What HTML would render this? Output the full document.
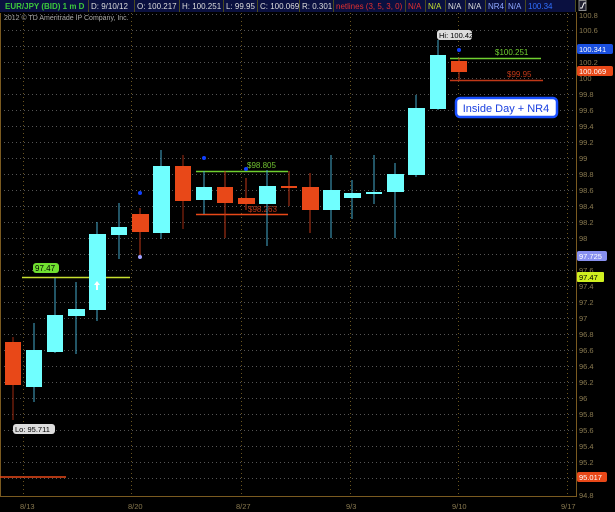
<!DOCTYPE html>
<html><head><meta charset="utf-8"><style>
html,body{margin:0;padding:0;background:#000;width:615px;height:512px;overflow:hidden;font-family:"Liberation Sans",sans-serif}
</style></head><body>
<svg width="615" height="512" xmlns="http://www.w3.org/2000/svg" font-family="Liberation Sans, sans-serif">
<rect width="615" height="512" fill="#000"/>
<!-- header -->
<rect x="0" y="0" width="576" height="12" fill="#0a1040"/>
<g stroke="#4a4a20" stroke-width="1">
<line x1="88.5" y1="0" x2="88.5" y2="12"/><line x1="134.5" y1="0" x2="134.5" y2="12"/><line x1="179.5" y1="0" x2="179.5" y2="12"/><line x1="223.5" y1="0" x2="223.5" y2="12"/><line x1="257.5" y1="0" x2="257.5" y2="12"/><line x1="299.5" y1="0" x2="299.5" y2="12"/><line x1="333.5" y1="0" x2="333.5" y2="12"/><line x1="405.5" y1="0" x2="405.5" y2="12"/><line x1="425.5" y1="0" x2="425.5" y2="12"/><line x1="445.5" y1="0" x2="445.5" y2="12"/><line x1="465.5" y1="0" x2="465.5" y2="12"/><line x1="485.5" y1="0" x2="485.5" y2="12"/><line x1="505.5" y1="0" x2="505.5" y2="12"/><line x1="525.5" y1="0" x2="525.5" y2="12"/><line x1="575.5" y1="0" x2="575.5" y2="12"/>
</g>
<g font-size="8" y="9">
<text x="5" y="9" fill="#3cc83c" font-weight="bold">EUR/JPY (BID) 1 m D</text>
<text x="91" y="9" fill="#ddd">D: 9/10/12</text>
<text x="137" y="9" fill="#ddd">O: 100.217</text>
<text x="182" y="9" fill="#ddd">H: 100.251</text>
<text x="226" y="9" fill="#ddd">L: 99.95</text>
<text x="260" y="9" fill="#ddd">C: 100.069</text>
<text x="302" y="9" fill="#ddd">R: 0.301</text>
<text x="336" y="9" fill="#e03030">netlines (3, 5, 3, 0)</text>
<text x="408" y="9" fill="#e03030">N/A</text>
<text x="428" y="9" fill="#c8e030">N/A</text>
<text x="448" y="9" fill="#ddd">N/A</text>
<text x="468" y="9" fill="#ddd">N/A</text>
<text x="488" y="9" fill="#8fa8ff">NR4</text>
<text x="508" y="9" fill="#8fa8ff">N/A</text>
<text x="528" y="9" fill="#3070ff">100.34</text>
</g>
<rect x="579" y="0.5" width="7" height="10" fill="#223" stroke="#888"/>
<path d="M580 8 L582 8 L584 3 L586 3" stroke="#fff" fill="none"/>
<text x="4" y="20" font-size="7" fill="#aaa">2012 © TD Ameritrade IP Company, Inc.</text>
<!-- grid -->
<g stroke="#555" stroke-width="1" stroke-dasharray="1,3">
<line x1="0" y1="14.5" x2="576" y2="14.5"/><line x1="0" y1="30.5" x2="576" y2="30.5"/><line x1="0" y1="46.5" x2="576" y2="46.5"/><line x1="0" y1="62.5" x2="576" y2="62.5"/><line x1="0" y1="78.5" x2="576" y2="78.5"/><line x1="0" y1="94.5" x2="576" y2="94.5"/><line x1="0" y1="110.5" x2="576" y2="110.5"/><line x1="0" y1="126.5" x2="576" y2="126.5"/><line x1="0" y1="142.5" x2="576" y2="142.5"/><line x1="0" y1="158.5" x2="576" y2="158.5"/><line x1="0" y1="174.5" x2="576" y2="174.5"/><line x1="0" y1="190.5" x2="576" y2="190.5"/><line x1="0" y1="206.5" x2="576" y2="206.5"/><line x1="0" y1="222.5" x2="576" y2="222.5"/><line x1="0" y1="238.5" x2="576" y2="238.5"/><line x1="0" y1="254.5" x2="576" y2="254.5"/><line x1="0" y1="270.5" x2="576" y2="270.5"/><line x1="0" y1="286.5" x2="576" y2="286.5"/><line x1="0" y1="302.5" x2="576" y2="302.5"/><line x1="0" y1="318.5" x2="576" y2="318.5"/><line x1="0" y1="334.5" x2="576" y2="334.5"/><line x1="0" y1="350.5" x2="576" y2="350.5"/><line x1="0" y1="366.5" x2="576" y2="366.5"/><line x1="0" y1="382.5" x2="576" y2="382.5"/><line x1="0" y1="398.5" x2="576" y2="398.5"/><line x1="0" y1="414.5" x2="576" y2="414.5"/><line x1="0" y1="430.5" x2="576" y2="430.5"/><line x1="0" y1="446.5" x2="576" y2="446.5"/><line x1="0" y1="462.5" x2="576" y2="462.5"/><line x1="0" y1="478.5" x2="576" y2="478.5"/>
</g>
<g stroke="#6a5520" stroke-width="1" stroke-dasharray="1,3">
<line x1="23.5" y1="13" x2="23.5" y2="496"/><line x1="131.5" y1="13" x2="131.5" y2="496"/><line x1="241.5" y1="13" x2="241.5" y2="496"/><line x1="350.5" y1="13" x2="350.5" y2="496"/><line x1="458.5" y1="13" x2="458.5" y2="496"/><line x1="567.5" y1="13" x2="567.5" y2="496"/>
</g>
<!-- axes -->
<line x1="576.5" y1="12" x2="576.5" y2="497" stroke="#7a5a20"/>
<line x1="0" y1="496.5" x2="577" y2="496.5" stroke="#7a5a20"/>
<line x1="0.5" y1="13" x2="0.5" y2="497" stroke="#7a5a20"/>
<g font-size="7.5" fill="#8a7a50">
<text x="579" y="33">100.6</text><text x="579" y="49">100.4</text><text x="579" y="65">100.2</text><text x="579" y="81">100</text><text x="579" y="97">99.8</text><text x="579" y="113">99.6</text><text x="579" y="129">99.4</text><text x="579" y="145">99.2</text><text x="579" y="161">99</text><text x="579" y="177">98.8</text><text x="579" y="193">98.6</text><text x="579" y="209">98.4</text><text x="579" y="225">98.2</text><text x="579" y="241">98</text><text x="579" y="257">97.8</text><text x="579" y="273">97.6</text><text x="579" y="289">97.4</text><text x="579" y="305">97.2</text><text x="579" y="321">97</text><text x="579" y="337">96.8</text><text x="579" y="353">96.6</text><text x="579" y="369">96.4</text><text x="579" y="385">96.2</text><text x="579" y="401">96</text><text x="579" y="417">95.8</text><text x="579" y="433">95.6</text><text x="579" y="449">95.4</text><text x="579" y="465">95.2</text><text x="579" y="498">94.8</text><text x="579" y="18">100.8</text>
<text x="20" y="509">8/13</text><text x="128" y="509">8/20</text><text x="236" y="509">8/27</text><text x="346" y="509">9/3</text><text x="452" y="509">9/10</text><text x="561" y="509">9/17</text>
</g>
<!-- price tags -->
<rect x="577" y="44" width="36" height="10" rx="2" fill="#1a50e0"/><text x="579" y="52" font-size="7.5" fill="#fff">100.341</text>
<rect x="577" y="66" width="36" height="10" rx="2" fill="#e84818"/><text x="579" y="74" font-size="7.5" fill="#fff">100.069</text>
<rect x="577" y="251" width="30" height="10" rx="2" fill="#8890f0"/><text x="579" y="259" font-size="7.5" fill="#fff">97.725</text>
<rect x="577" y="272" width="27" height="10" rx="1" fill="#d0f020"/><text x="579" y="280" font-size="7.5" fill="#000">97.47</text>
<rect x="577" y="472" width="30" height="10" rx="2" fill="#e84818"/><text x="579" y="480" font-size="7.5" fill="#fff">95.017</text>
<line x1="0" y1="477" x2="66" y2="477" stroke="#e84818" stroke-width="1.5"/>
<!-- lines -->
<line x1="22" y1="277.5" x2="130" y2="277.5" stroke="#c8e030" stroke-width="1.5"/>
<rect x="33" y="263" width="26" height="10" rx="3" fill="#70e030"/><text x="35" y="271" font-size="8" fill="#000">97.47</text>
<line x1="196" y1="171.5" x2="288" y2="171.5" stroke="#70d030" stroke-width="1.5"/>
<text x="247" y="168" font-size="8" fill="#70c030">$98.805</text>
<line x1="196" y1="214.5" x2="288" y2="214.5" stroke="#e84818" stroke-width="1.5"/>
<text x="248" y="212" font-size="8" fill="#c03818">$98.263</text>
<line x1="450" y1="58.5" x2="541" y2="58.5" stroke="#70d030" stroke-width="1.5"/>
<text x="495" y="55" font-size="8" fill="#70d030">$100.251</text>
<line x1="450" y1="80.5" x2="543" y2="80.5" stroke="#c03818" stroke-width="1.5"/>
<text x="507" y="77" font-size="8" fill="#c03818">$99.95</text>
<!-- candles -->
<g stroke-width="1">
<line x1="13" y1="337" x2="13" y2="420" stroke="#a02a10"/><rect x="5" y="342" width="16" height="43" fill="#e84818"/>
<line x1="34" y1="323" x2="34" y2="402" stroke="#4ac"/><rect x="26" y="350" width="16" height="37" fill="#70ffff"/>
<line x1="55" y1="278" x2="55" y2="353" stroke="#4ac"/><rect x="47" y="315" width="16" height="37" fill="#70ffff"/>
<line x1="76" y1="282" x2="76" y2="354" stroke="#4ac"/><rect x="68" y="309" width="17" height="7" fill="#70ffff"/>
<line x1="97" y1="222" x2="97" y2="321" stroke="#4ac"/><rect x="89" y="234" width="17" height="76" fill="#70ffff"/>
<line x1="119" y1="203" x2="119" y2="259" stroke="#4ac"/><rect x="111" y="227" width="16" height="8" fill="#70ffff"/>
<line x1="140" y1="208" x2="140" y2="256" stroke="#c03818"/><rect x="132" y="214" width="17" height="18" fill="#e84818"/>
<line x1="161" y1="150" x2="161" y2="239" stroke="#4ac"/><rect x="153" y="166" width="17" height="67" fill="#70ffff"/>
<line x1="183" y1="155" x2="183" y2="229" stroke="#a02a10"/><rect x="175" y="166" width="16" height="35" fill="#e84818"/>
<line x1="204" y1="171" x2="204" y2="214" stroke="#4ac"/><rect x="196" y="187" width="16" height="13" fill="#70ffff"/>
<line x1="225" y1="171" x2="225" y2="238" stroke="#c03818"/><rect x="217" y="187" width="16" height="16" fill="#e84818"/>
<line x1="246" y1="178" x2="246" y2="210" stroke="#c03818"/><rect x="238" y="198" width="17" height="6" fill="#e84818"/>
<line x1="267" y1="170" x2="267" y2="246" stroke="#4ac"/><rect x="259" y="186" width="17" height="18" fill="#70ffff"/>
<line x1="289" y1="171" x2="289" y2="206" stroke="#c03818"/><rect x="281" y="186" width="16" height="2" fill="#e84818"/>
<line x1="310" y1="173" x2="310" y2="233" stroke="#c03818"/><rect x="302" y="187" width="17" height="23" fill="#e84818"/>
<line x1="331" y1="155" x2="331" y2="238" stroke="#4ac"/><rect x="323" y="190" width="17" height="20" fill="#70ffff"/>
<line x1="352" y1="180" x2="352" y2="219" stroke="#4ac"/><rect x="344" y="193" width="17" height="5" fill="#70ffff"/>
<line x1="374" y1="155" x2="374" y2="204" stroke="#4ac"/><rect x="366" y="192" width="16" height="2" fill="#70ffff"/>
<line x1="395" y1="163" x2="395" y2="238" stroke="#4ac"/><rect x="387" y="174" width="17" height="18" fill="#70ffff"/>
<line x1="416" y1="95" x2="416" y2="177" stroke="#4ac"/><rect x="408" y="108" width="17" height="67" fill="#70ffff"/>
<line x1="438" y1="40" x2="438" y2="110" stroke="#4ac"/><rect x="430" y="55" width="16" height="54" fill="#70ffff"/>
<line x1="459" y1="58" x2="459" y2="81" stroke="#c03818"/><rect x="451" y="61" width="16" height="11" fill="#e84818"/>
</g>
<path d="M97 281 L100 285 L98 285 L98 290 L96 290 L96 285 L94 285 Z" fill="#fff"/>
<circle cx="140" cy="193" r="2" fill="#1040ff"/><circle cx="140" cy="257" r="2" fill="#a0a0ff"/>
<circle cx="204" cy="158" r="2" fill="#1040ff"/><circle cx="246" cy="169" r="2" fill="#1040ff"/><circle cx="459" cy="50" r="2" fill="#1040ff"/>
<!-- callouts -->
<rect x="437" y="30" width="35" height="10" rx="3" fill="#ddd"/><text x="439" y="38" font-size="7.5" fill="#000">Hi: 100.422</text>
<rect x="13" y="424" width="42" height="10" rx="3" fill="#ddd"/><text x="15" y="432" font-size="7.5" fill="#000">Lo: 95.711</text>
<rect x="456" y="98" width="101" height="19" rx="4" fill="#fff" stroke="#1a50ff" stroke-width="2.5"/>
<text x="506" y="112" font-size="11" fill="#1a40e0" text-anchor="middle">Inside Day + NR4</text>
</svg>
</body></html>
